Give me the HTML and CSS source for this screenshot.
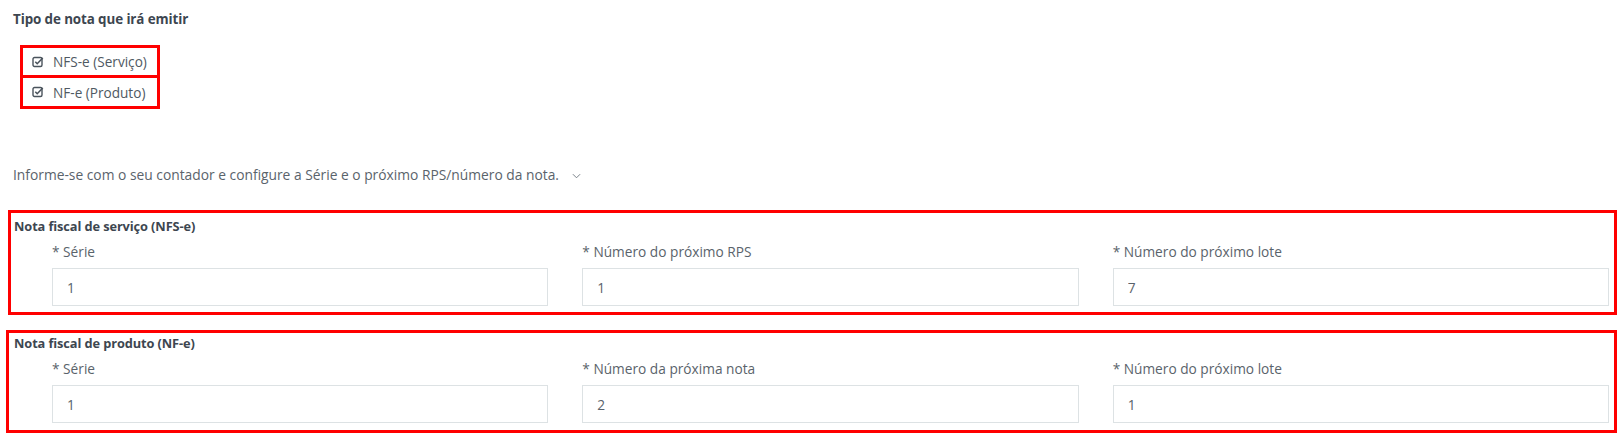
FILE: index.html
```html
<!DOCTYPE html>
<html lang="pt-BR">
<head>
  <meta charset="UTF-8">
  <title>Configuração de notas fiscais</title>
  <link rel="stylesheet" href="styles.css">
</head>
<body>
  <div class="page">
    <h3 class="title">Tipo de nota que irá emitir</h3>
    <div class="tipos">
      <label class="tipo">
        <svg class="check" viewBox="0 0 12 12" width="12" height="12"><rect x="1" y="1.5" width="9" height="9" rx="1.5" fill="none" stroke="#4a535c" stroke-width="1.4"/><path d="M3.3 5.8 L5.2 7.7 L10.8 2" fill="none" stroke="#4a535c" stroke-width="1.6"/></svg>
        NFS-e (Serviço)
      </label>
      <label class="tipo">
        <svg class="check" viewBox="0 0 12 12" width="12" height="12"><rect x="1" y="1.5" width="9" height="9" rx="1.5" fill="none" stroke="#4a535c" stroke-width="1.4"/><path d="M3.3 5.8 L5.2 7.7 L10.8 2" fill="none" stroke="#4a535c" stroke-width="1.6"/></svg>
        NF-e (Produto)
      </label>
    </div>

    <div class="info">
      Informe-se com o seu contador e configure a Série e o próximo RPS/número da nota.
      <svg class="chevron" viewBox="0 0 10 6" width="9" height="6"><path d="M1 1 L5 5 L9 1" fill="none" stroke="#6b747c" stroke-width="1"/></svg>
    </div>

    <div class="secao">
      <h4>Nota fiscal de serviço (NFS-e)</h4>
      <div class="campos">
        <div class="campo">
          <label>* Série</label>
          <input type="text" value="1">
        </div>
        <div class="campo">
          <label>* Número do próximo RPS</label>
          <input type="text" value="1">
        </div>
        <div class="campo">
          <label>* Número do próximo lote</label>
          <input type="text" value="7">
        </div>
      </div>
    </div>

    <div class="secao secao-produto">
      <h4>Nota fiscal de produto (NF-e)</h4>
      <div class="campos">
        <div class="campo">
          <label>* Série</label>
          <input type="text" value="1">
        </div>
        <div class="campo">
          <label>* Número da próxima nota</label>
          <input type="text" value="2">
        </div>
        <div class="campo">
          <label>* Número do próximo lote</label>
          <input type="text" value="1">
        </div>
      </div>
    </div>
  </div>
</body>
</html>
```

FILE: styles.css
```css
body { margin: 0; background: #fff; font-family: "Open Sans", Arial, sans-serif; color: #58616a; }
.page { padding: 10px 5px 0 8px; }
.title { margin: 0 0 0 5px; font-size: 13.4px; font-weight: 700; color: #3d4650; line-height: 18px; letter-spacing: -0.1px; }
.tipos { margin: 17px 0 0 12px; width: 140px; }
.tipo { display: flex; align-items: center; gap: 9px; height: 27px; padding: 0 0 0 9px; border: 3px solid #ff0000; font-size: 13.6px; color: #4f5962; }
.tipo + .tipo { border-top: none; height: 28px; }
.check { flex: none; }
.info { margin: 56px 0 0 5px; font-size: 13.8px; color: #5a636b; line-height: 20px; }
.chevron { margin-left: 9px; vertical-align: middle; }
.secao { margin-top: 25px; border: 3px solid #ff0000; padding: 5px 2px 5px 3px; height: 89px; }
.secao-produto { margin-top: 15px; margin-left: -2px; height: 90px; padding-top: 2px; padding-left: 5px; }
.secao h4 { margin: 0; font-size: 12.8px; font-weight: 700; color: #3d4650; line-height: 17px; letter-spacing: -0.1px; }
.campos { display: grid; grid-template-columns: repeat(3, 1fr); column-gap: 34px; padding: 0 3px 0 38px; margin-top: 7px; }
.campo label { display: block; font-size: 13.7px; line-height: 20px; color: #5a636b; margin-bottom: 6px; }
.campo input { display: block; box-sizing: border-box; width: 100%; height: 38px; border: 1px solid #dde2e4; padding: 0 14px; font-family: "Open Sans", Arial, sans-serif; font-size: 13.7px; color: #5a636b; outline: none; }
```
